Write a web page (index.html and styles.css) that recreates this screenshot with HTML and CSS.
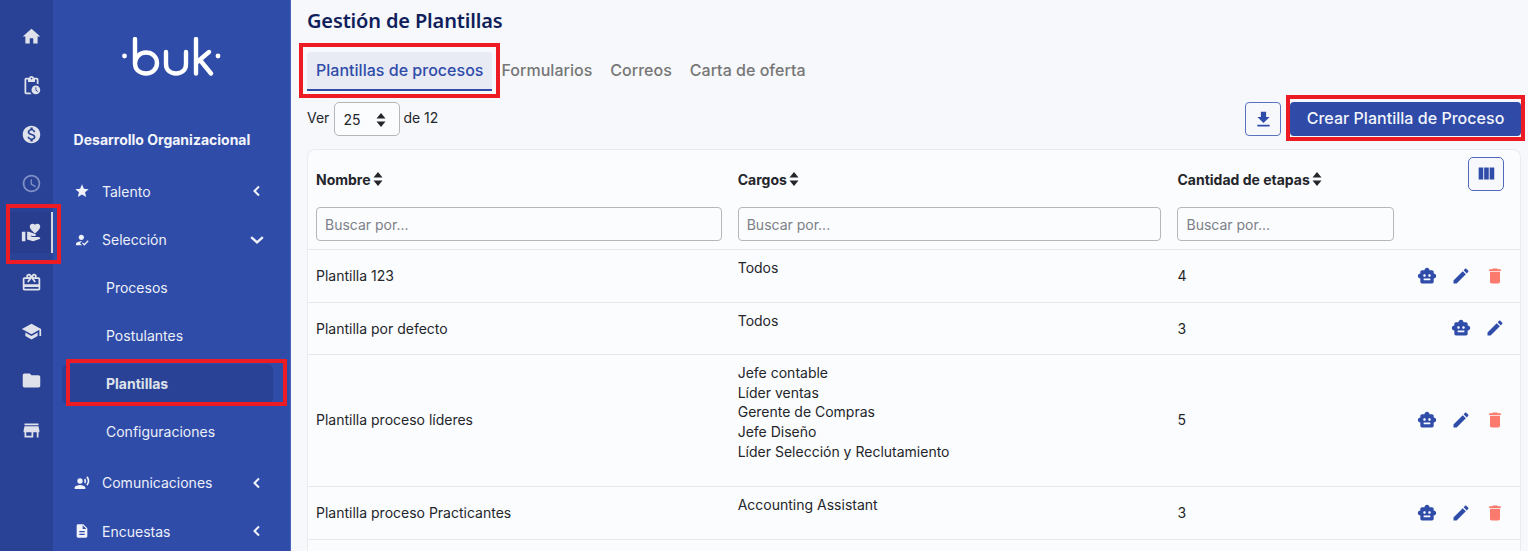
FILE: index.html
```html
<!DOCTYPE html>
<html lang="es">
<head>
<meta charset="utf-8">
<title>Gestión de Plantillas</title>
<link rel="stylesheet" href="styles.css">
</head>
<body>
<div class="app">
  <nav class="rail">
    <a class="rail-item"><svg viewBox="0 0 24 24"><path d="M10 20v-6h4v6h5v-8h3L12 3 2 12h3v8z"/></svg></a>
    <a class="rail-item"><svg viewBox="0 0 24 24"><path d="M17 12c-2.76 0-5 2.24-5 5s2.24 5 5 5 5-2.24 5-5-2.24-5-5-5zm1.65 7.35L16.5 17.2V14h1v2.79l1.85 1.85-.7.71zM18 3h-3.18C14.4 1.84 13.3 1 12 1s-2.4.84-2.82 2H6c-1.1 0-2 .9-2 2v15c0 1.1.9 2 2 2h6.11c-.59-.57-1.07-1.25-1.42-2H6V5h2v3h8V5h2v5.08c.71.1 1.38.31 2 .6V5c0-1.1-.9-2-2-2zm-6 2c-.55 0-1-.45-1-1s.45-1 1-1 1 .45 1 1-.45 1-1 1z"/></svg></a>
    <a class="rail-item"><svg viewBox="0 0 24 24"><path d="M12 2C6.48 2 2 6.48 2 12s4.48 10 10 10 10-4.48 10-10S17.52 2 12 2zm1.41 16.09V20h-2.67v-1.93c-1.71-.36-3.16-1.46-3.27-3.4h1.96c.1 1.05.82 1.87 2.65 1.87 1.96 0 2.4-.98 2.4-1.59 0-.83-.44-1.61-2.67-2.14-2.48-.6-4.18-1.62-4.18-3.67 0-1.72 1.39-2.84 3.11-3.21V4h2.67v1.95c1.86.45 2.79 1.86 2.85 3.39H14.3c-.05-1.11-.64-1.87-2.22-1.87-1.5 0-2.4.68-2.4 1.64 0 .84.65 1.39 2.67 1.91s4.18 1.39 4.18 3.91c-.01 1.83-1.38 2.83-3.12 3.16z"/></svg></a>
    <a class="rail-item dim"><svg viewBox="0 0 24 24"><path d="M11.99 2C6.47 2 2 6.48 2 12s4.47 10 9.99 10C17.52 22 22 17.52 22 12S17.52 2 11.99 2zM12 20c-4.42 0-8-3.58-8-8s3.58-8 8-8 8 3.58 8 8-3.58 8-8 8zM12.5 7H11v6l5.25 3.15.75-1.23-4.5-2.67z"/></svg></a>
    <a class="rail-item active"><svg viewBox="0 0 24 24"><path d="M1 11h4v11H1zm15-7.75C16.65 2.49 17.66 2 18.7 2 20.55 2 22 3.45 22 5.3c0 2.27-2.91 4.9-6 7.7-3.09-2.81-6-5.44-6-7.7C10 3.45 11.45 2 13.3 2c1.04 0 2.05.49 2.7 1.25zM20 17h-7l-2.09-.73.33-.94L13 16h2.82c.65 0 1.18-.53 1.18-1.18 0-.49-.31-.93-.77-1.11L8.97 11H7v9.02L14 22l8.01-3c-.01-1.1-.9-2-2.01-2z"/></svg></a>
    <a class="rail-item"><svg viewBox="0 0 24 24"><path d="M20 6h-2.18c.11-.31.18-.65.18-1 0-1.66-1.34-3-3-3-1.05 0-1.96.54-2.5 1.35l-.5.67-.5-.68C10.96 2.54 10.05 2 9 2 7.34 2 6 3.34 6 5c0 .35.07.69.18 1H4c-1.11 0-1.99.89-1.99 2L2 19c0 1.11.89 2 2 2h16c1.11 0 2-.89 2-2V8c0-1.11-.89-2-2-2zm-5-2c.55 0 1 .45 1 1s-.45 1-1 1-1-.45-1-1 .45-1 1-1zM9 4c.55 0 1 .45 1 1s-.45 1-1 1-1-.45-1-1 .45-1 1-1zm11 15H4v-2h16v2zm0-5H4V8h5.08L7 10.83 8.62 12 11 8.76l1-1.36 1 1.36L15.38 12 17 10.83 14.92 8H20v6z"/></svg></a>
    <a class="rail-item"><svg viewBox="0 0 24 24"><path d="M5 13.18v4L12 21l7-3.82v-4L12 17l-7-3.82zM12 3L1 9l11 6 9-4.91V17h2V9L12 3z"/></svg></a>
    <a class="rail-item"><svg viewBox="0 0 24 24"><path d="M10 4H4c-1.1 0-1.99.9-1.99 2L2 18c0 1.1.9 2 2 2h16c1.1 0 2-.9 2-2V8c0-1.1-.9-2-2-2h-8l-2-2z"/></svg></a>
    <a class="rail-item"><svg viewBox="0 0 24 24"><path d="M20 4H4v2h16V4zm1 10v-2l-1-5H4l-1 5v2h1v6h10v-6h4v6h2v-6h1zm-9 4H6v-4h6v4z"/></svg></a>
  </nav>

  <aside class="sidebar">
    <div class="logo">
      <svg class="logo-mark" viewBox="0 0 100 40" aria-label="buk">
        <circle cx="3.5" cy="19" r="2.4" class="logo-dot"/>
        <circle cx="97" cy="19" r="2.4" class="logo-dot"/>
        <path class="logo-stroke" d="M14 2v24.500c0 6.500 5 10 11 10s11-4 11-10.500S31 15.500 25 15.500 14 20 14 26.500"/>
        <path class="logo-stroke" d="M45 15v12c0 6 4 9.500 10 9.500s10-3.500 10-9.500V15"/>
        <path class="logo-stroke" d="M75 2v34.500M75 26l13-11M79 23l11 13.500"/>
      </svg>
    </div>
    <h2 class="section-title">Desarrollo Organizacional</h2>
    <ul class="menu">
      <li class="menu-item"><svg class="menu-icon" viewBox="0 0 24 24"><path d="M12 17.270L18.180 21l-1.640-7.030L22 9.240l-7.190-.610L12 2 9.190 8.630 2 9.240l5.460 4.730L5.820 21z"/></svg><span class="menu-label">Talento</span><svg class="chev" viewBox="0 0 12 12"><path d="M8 1.500 3.500 6 8 10.500"/></svg></li>
      <li class="menu-item open"><svg class="menu-icon" viewBox="0 0 24 24"><path d="M9 17l3-2.940c-.390-.040-.680-.060-1-.060-2.670 0-8 1.340-8 4v2h9l-3-3zm2-5c2.210 0 4-1.790 4-4s-1.790-4-4-4-4 1.790-4 4 1.790 4 4 4zM15.470 20.500L12 17l1.400-1.410 2.070 2.080 5.130-5.170 1.400 1.410z"/></svg><span class="menu-label">Selección</span><svg class="chev wide" viewBox="0 0 12 12"><path d="M1 3.500 6 8l5-4.500"/></svg></li>
      <li class="sub-item">Procesos</li>
      <li class="sub-item">Postulantes</li>
      <li class="sub-item current">Plantillas</li>
      <li class="sub-item">Configuraciones</li>
      <li class="menu-item spaced"><svg class="menu-icon" viewBox="0 0 24 24"><path d="M5 9a4 4 0 1 0 8 0 4 4 0 1 0-8 0zM9 15c-2.670 0-8 1.340-8 4v2h16v-2c0-2.660-5.330-4-8-4zm7.760-9.640l-1.680 1.690c.840 1.180.840 2.710 0 3.890l1.680 1.690c2.020-2.020 2.020-5.070 0-7.270zM20.070 2l-1.630 1.630c2.770 3.020 2.770 7.560 0 10.740L20.070 16c3.900-3.890 3.910-9.950 0-14z"/></svg><span class="menu-label">Comunicaciones</span><svg class="chev" viewBox="0 0 12 12"><path d="M8 1.500 3.500 6 8 10.500"/></svg></li>
      <li class="menu-item"><svg class="menu-icon" viewBox="0 0 24 24"><path d="M14 2H6c-1.100 0-1.990.900-1.990 2L4 20c0 1.100.890 2 1.990 2H18c1.100 0 2-.900 2-2V8l-6-6zm2 16H8v-2h8v2zm0-4H8v-2h8v2zm-3-5V3.500L18.500 9H13z"/></svg><span class="menu-label">Encuestas</span><svg class="chev" viewBox="0 0 12 12"><path d="M8 1.500 3.500 6 8 10.500"/></svg></li>
    </ul>
  </aside>

  <main class="main">
    <h1 class="page-title">Gestión de Plantillas</h1>
    <div class="tabs">
      <a class="tab selected">Plantillas de procesos</a>
      <a class="tab">Formularios</a>
      <a class="tab">Correos</a>
      <a class="tab">Carta de oferta</a>
    </div>
    <div class="toolbar">
      <div class="pager">
        <span>Ver</span>
        <span class="select-wrap">
          <select class="select"><option>25</option></select>
          <svg class="sort select-arrow" viewBox="0 0 10 14"><path d="M5 0l4.500 5.500h-9zM5 14 .5 8.500h9z"/></svg>
        </span>
        <span>de 12</span>
      </div>
      <div class="actions">
        <button class="btn-outline"><svg viewBox="0 0 24 24"><path d="M19 9h-4V3H9v6H5l7 7 7-7zM5 18v2h14v-2H5z"/></svg></button>
        <button class="btn-primary">Crear Plantilla de Proceso</button>
      </div>
    </div>
    <div class="card">
      <table class="table">
        <colgroup><col class="c1"><col class="c2"><col class="c3"><col></colgroup>
        <thead>
          <tr class="head-row">
            <th><span class="th-label">Nombre<svg class="sort" viewBox="0 0 10 14"><path d="M5 0l4.500 5.500h-9zM5 14 .5 8.500h9z"/></svg></span></th>
            <th><span class="th-label">Cargos<svg class="sort" viewBox="0 0 10 14"><path d="M5 0l4.500 5.500h-9zM5 14 .5 8.500h9z"/></svg></span></th>
            <th><span class="th-label">Cantidad de etapas<svg class="sort" viewBox="0 0 10 14"><path d="M5 0l4.500 5.500h-9zM5 14 .5 8.500h9z"/></svg></span></th>
            <th class="th-tool"><button class="btn-outline btn-columns"><svg viewBox="0 0 24 24"><path d="M10 18h5V5h-5v13zm-6 0h5V5H4v13zM16 5v13h5V5h-5z"/></svg></button></th>
          </tr>
          <tr class="filter-row">
            <th><input class="search" placeholder="Buscar por..."></th>
            <th><input class="search" placeholder="Buscar por..."></th>
            <th><input class="search" placeholder="Buscar por..."></th>
            <th></th>
          </tr>
        </thead>
        <tbody>
          <tr>
            <td>Plantilla 123</td>
            <td class="cargos"><ul><li>Todos</li></ul></td>
            <td>4</td>
            <td><div class="row-actions">
              <svg class="ico" viewBox="0 0 24 24"><path d="M20 9V7c0-1.100-.900-2-2-2h-3c0-1.660-1.340-3-3-3S9 3.340 9 5H6c-1.100 0-2 .900-2 2v2c-1.660 0-3 1.340-3 3s1.340 3 3 3v4c0 1.100.900 2 2 2h12c1.100 0 2-.900 2-2v-4c1.660 0 3-1.340 3-3s-1.340-3-3-3zM7.500 11.500c0-.830.670-1.500 1.500-1.500s1.500.670 1.500 1.500S9.830 13 9 13s-1.500-.670-1.500-1.500zM16 17H8v-2h8v2zm-1-4c-.830 0-1.500-.670-1.500-1.500S14.170 10 15 10s1.500.670 1.500 1.500S15.830 13 15 13z"/></svg>
              <svg class="ico" viewBox="0 0 24 24"><path d="M3 17.250V21h3.750L17.810 9.940l-3.750-3.750L3 17.250zM20.710 7.040c.390-.390.390-1.020 0-1.410l-2.340-2.340c-.390-.390-1.020-.390-1.410 0l-1.830 1.830 3.750 3.750 1.830-1.830z"/></svg>
              <svg class="ico danger" viewBox="0 0 24 24"><path d="M6 19c0 1.100.900 2 2 2h8c1.100 0 2-.900 2-2V7H6v12zM19 4h-3.500l-1-1h-5l-1 1H5v2h14V4z"/></svg>
            </div></td>
          </tr>
          <tr>
            <td>Plantilla por defecto</td>
            <td class="cargos"><ul><li>Todos</li></ul></td>
            <td>3</td>
            <td><div class="row-actions">
              <svg class="ico" viewBox="0 0 24 24"><path d="M20 9V7c0-1.100-.900-2-2-2h-3c0-1.660-1.340-3-3-3S9 3.340 9 5H6c-1.100 0-2 .900-2 2v2c-1.660 0-3 1.340-3 3s1.340 3 3 3v4c0 1.100.900 2 2 2h12c1.100 0 2-.900 2-2v-4c1.660 0 3-1.340 3-3s-1.340-3-3-3zM7.500 11.500c0-.830.670-1.500 1.500-1.500s1.500.670 1.500 1.500S9.830 13 9 13s-1.500-.670-1.500-1.500zM16 17H8v-2h8v2zm-1-4c-.830 0-1.500-.670-1.500-1.500S14.170 10 15 10s1.500.670 1.500 1.500S15.830 13 15 13z"/></svg>
              <svg class="ico" viewBox="0 0 24 24"><path d="M3 17.250V21h3.750L17.810 9.940l-3.750-3.750L3 17.250zM20.710 7.040c.390-.390.390-1.020 0-1.410l-2.340-2.340c-.390-.390-1.020-.390-1.410 0l-1.830 1.830 3.750 3.750 1.830-1.830z"/></svg>
            </div></td>
          </tr>
          <tr class="tall">
            <td>Plantilla proceso líderes</td>
            <td class="cargos"><ul><li>Jefe contable</li><li>Líder ventas</li><li>Gerente de Compras</li><li>Jefe Diseño</li><li>Líder Selección y Reclutamiento</li></ul></td>
            <td>5</td>
            <td><div class="row-actions">
              <svg class="ico" viewBox="0 0 24 24"><path d="M20 9V7c0-1.100-.900-2-2-2h-3c0-1.660-1.340-3-3-3S9 3.340 9 5H6c-1.100 0-2 .900-2 2v2c-1.660 0-3 1.340-3 3s1.340 3 3 3v4c0 1.100.900 2 2 2h12c1.100 0 2-.900 2-2v-4c1.660 0 3-1.340 3-3s-1.340-3-3-3zM7.500 11.500c0-.830.670-1.500 1.500-1.500s1.500.670 1.500 1.500S9.830 13 9 13s-1.500-.670-1.500-1.500zM16 17H8v-2h8v2zm-1-4c-.830 0-1.500-.670-1.500-1.500S14.170 10 15 10s1.500.670 1.500 1.500S15.830 13 15 13z"/></svg>
              <svg class="ico" viewBox="0 0 24 24"><path d="M3 17.250V21h3.750L17.810 9.940l-3.750-3.750L3 17.250zM20.710 7.040c.390-.390.390-1.020 0-1.410l-2.340-2.340c-.390-.390-1.020-.390-1.410 0l-1.830 1.830 3.750 3.750 1.830-1.830z"/></svg>
              <svg class="ico danger" viewBox="0 0 24 24"><path d="M6 19c0 1.100.900 2 2 2h8c1.100 0 2-.900 2-2V7H6v12zM19 4h-3.500l-1-1h-5l-1 1H5v2h14V4z"/></svg>
            </div></td>
          </tr>
          <tr>
            <td>Plantilla proceso Practicantes</td>
            <td class="cargos"><ul><li>Accounting Assistant</li></ul></td>
            <td>3</td>
            <td><div class="row-actions">
              <svg class="ico" viewBox="0 0 24 24"><path d="M20 9V7c0-1.100-.900-2-2-2h-3c0-1.660-1.340-3-3-3S9 3.340 9 5H6c-1.100 0-2 .900-2 2v2c-1.660 0-3 1.340-3 3s1.340 3 3 3v4c0 1.100.900 2 2 2h12c1.100 0 2-.900 2-2v-4c1.660 0 3-1.340 3-3s-1.340-3-3-3zM7.500 11.500c0-.830.670-1.500 1.500-1.500s1.500.670 1.500 1.500S9.830 13 9 13s-1.500-.670-1.500-1.500zM16 17H8v-2h8v2zm-1-4c-.830 0-1.500-.670-1.500-1.500S14.170 10 15 10s1.500.670 1.500 1.500S15.830 13 15 13z"/></svg>
              <svg class="ico" viewBox="0 0 24 24"><path d="M3 17.250V21h3.750L17.810 9.940l-3.750-3.750L3 17.250zM20.710 7.040c.390-.390.390-1.020 0-1.410l-2.340-2.340c-.390-.390-1.020-.390-1.410 0l-1.830 1.830 3.750 3.750 1.830-1.830z"/></svg>
              <svg class="ico danger" viewBox="0 0 24 24"><path d="M6 19c0 1.100.900 2 2 2h8c1.100 0 2-.900 2-2V7H6v12zM19 4h-3.500l-1-1h-5l-1 1H5v2h14V4z"/></svg>
            </div></td>
          </tr>
        </tbody>
      </table>
    </div>
  </main>
</div>
<div class="mark mark-rail"></div>
<div class="mark mark-sub"></div>
<div class="mark mark-tab"></div>
<div class="mark mark-btn"></div>
</body>
</html>
```
FILE: styles.css
```css
* { box-sizing: border-box; }
html, body { margin: 0; height: 100%; overflow: hidden; }
body { font-family: "Inter", "Liberation Sans", sans-serif; font-size: 14px; color: #24262b; background: #f7f8fb; }
.app { display: flex; height: 551px; overflow: hidden; }

.rail { width: 53px; flex: none; background: #2a4296; padding-top: 11.400px; display: flex; flex-direction: column; }
.rail-item { height: 49.250px; flex: none; display: flex; align-items: center; justify-content: center; padding-left: 9px; }
.rail-item svg { width: 21px; height: 21px; fill: #dfe2ea; }
.rail-item.dim svg { fill: #7f90c6; }
.rail-item.active { margin-left: 10px; padding-left: 1px; background: #293d8e; border-right: 2px solid #d5d8e2; height: 41px; margin-top: 4px; margin-bottom: 4.250px; }

.sidebar { width: 238px; flex: none; background: #2f4ca9; border-right: 1px solid #4c67b9; color: #edf0f9; }
.logo { height: 120px; padding: 37px 0 0 68px; }
.logo-mark { display: block; width: 100px; height: 40px; }
.logo-dot { fill: #fff; }
.logo-stroke { fill: none; stroke: #fff; stroke-width: 4.400; stroke-linecap: round; stroke-linejoin: round; }
.section-title { margin: 0; padding-left: 20.600px; height: 47px; font-size: 14px; font-weight: 700; line-height: 40px; color: #f3f5fb; }
.menu { list-style: none; margin: 0; padding: 0; }
.menu-item { height: 48.500px; display: flex; align-items: center; padding-left: 21px; }
.menu-item.open { height: 48px; }
.menu-item.spaced { margin-top: 3px; }
.menu-icon { width: 16px; height: 16px; fill: #f1f3fa; flex: none; }
.menu-label { margin-left: 12px; flex: 1; }
.chev { width: 12px; height: 12px; margin-right: 27px; fill: none; stroke: #f1f3fa; stroke-width: 2; flex: none; }
.chev.wide { width: 14px; height: 14px; margin-right: 26px; }
.sub-item { height: 48px; margin-left: 9px; margin-right: 17px; padding-left: 44px; display: flex; align-items: center; border-radius: 6px; }
.sub-item:first-of-type { margin-top: -1px; }
.sub-item.current { background: #2a4296; height: 40px; margin-top: 4px; margin-bottom: 4px; font-weight: 700; color: #dfe2ea; }

.main { flex: 1; min-width: 0; padding: 0 7px 0 16px; }
.page-title { margin: 0; height: 52px; padding-top: 6px; font-family: "Noto Sans", sans-serif; font-size: 20px; font-weight: 600; letter-spacing: -0.150px; line-height: 30px; color: #101f5c; }
.tabs { display: flex; height: 39px; }
.tab { padding: 0 9px; font-size: 16px; font-weight: 500; letter-spacing: 0.020px; line-height: 37px; color: #767676; }
.tab.selected { background: #e8ebf4; color: #2f4ca9; border-bottom: 2px solid #2f4ca9; border-radius: 4px 4px 0 0; }
.toolbar { display: flex; justify-content: space-between; align-items: flex-start; margin-top: 11px; height: 47px; }
.pager { display: flex; align-items: flex-start; line-height: 31px; }
.select-wrap { position: relative; display: block; margin: 0 3px 0 5px; }
.select { display: block; appearance: none; width: 66px; height: 34px; padding: 0 0 0 8px; font: 14px "Inter", sans-serif; color: #24262b; background: #fbfcfe; border: 1px solid #b5b7bd; border-radius: 5px; }
.select-arrow { position: absolute; right: 14px; top: 11px; width: 8px; height: 11px; margin: 0; fill: #3a3c42; }
.actions { display: flex; gap: 9px; }
.btn-outline { width: 36px; height: 34px; padding: 0; display: flex; align-items: center; justify-content: center; background: #f7f8fb; border: 1px solid #5a73c0; border-radius: 4px; }
.btn-outline svg { width: 21px; height: 21px; fill: #2f4ca9; }
.btn-primary { width: 231px; height: 34px; padding: 0 0 2px; background: #2f4ba7; color: #f3f5fb; border: 0; border-radius: 4px; font: 500 16px "Inter", sans-serif; letter-spacing: 0.030px; }

.card { background: #fbfcfe; border: 1px solid #e9ebf0; border-bottom: 0; border-radius: 8px 8px 0 0; height: 420px; }
.table { width: 100%; table-layout: fixed; border-collapse: separate; border-spacing: 0; }
.c1 { width: 421.700px; }
.c2 { width: 439.800px; }
.c3 { width: 233px; }
th { padding: 0 8px; text-align: left; font-weight: 700; }
.head-row th { height: 57px; padding-top: 1px; }
.filter-row th { height: 42px; padding-bottom: 8px; vertical-align: top; border-bottom: 1px solid #e6e8ed; }
.th-label { display: inline-flex; align-items: center; gap: 2px; color: #24262b; }
.sort { width: 10px; height: 14px; fill: #24262b; flex: none; }
.head-row .th-tool { padding: 7px 16px 0 8px; vertical-align: top; }
.btn-columns { margin-left: auto; border-color: #4f69bd; border-radius: 5px; }
.btn-columns svg { width: 22px; height: 22px; }
.search { display: block; width: 100%; height: 34px; padding: 0 8px; font: 14px "Inter", sans-serif; background: #fbfcfe; border: 1px solid #b5b7bd; border-radius: 4px; }
.search::placeholder { color: #7d8087; opacity: 1; }
td { padding: 8px; border-bottom: 1px solid #e6e8ed; line-height: 19.600px; vertical-align: middle; }
.tall td { padding-bottom: 9px; }
.cargos ul { list-style: none; margin: 0 0 16px; padding: 0; }
.row-actions { display: flex; justify-content: flex-end; gap: 14px; padding-right: 7px; }
.ico { width: 20px; height: 20px; fill: #2f4ca9; flex: none; }
.ico.danger { fill: #fb7a6e; }

.mark { position: absolute; border: 4px solid #ed1c24; pointer-events: none; }
.mark-rail { left: 6px; top: 204px; width: 55px; height: 60px; }
.mark-sub { left: 66px; top: 359px; width: 221px; height: 47px; }
.mark-tab { left: 299px; top: 43px; width: 201px; height: 55px; }
.mark-btn { left: 1286px; top: 95px; width: 239px; height: 46px; }
```
